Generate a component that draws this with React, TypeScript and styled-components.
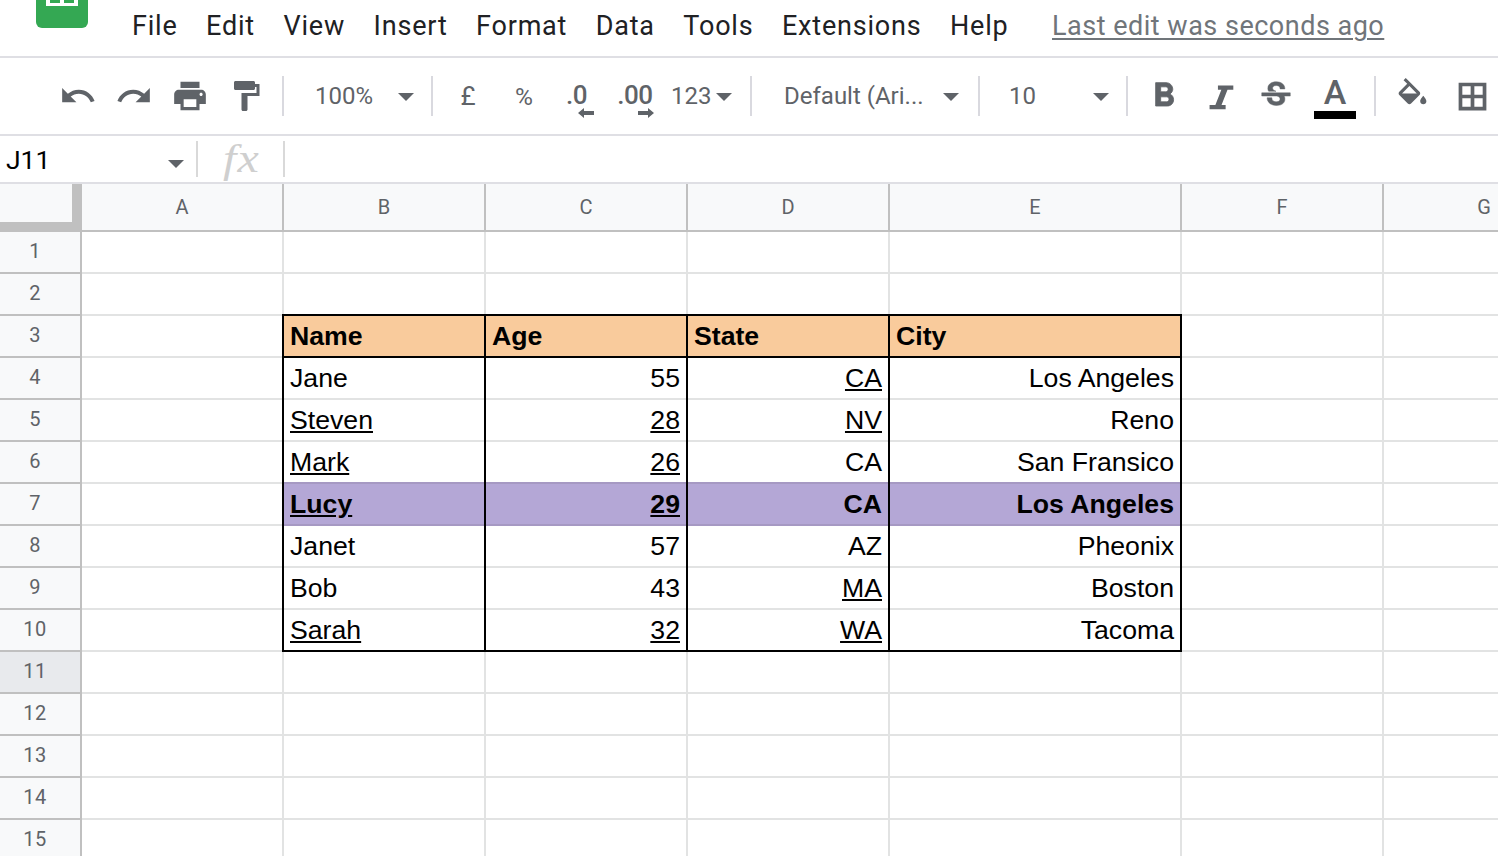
import styled, { createGlobalStyle } from 'styled-components';

const ROBOTO = '"Roboto", "Liberation Sans", sans-serif';
const INK = '#000000';
const ICON = '#5f6368';
const GRID = '#e2e3e3';
const HEADER_LINE = '#c0c0c0';
const BAR_LINE = '#dfdfe4';

const COLUMNS = ['A', 'B', 'C', 'D', 'E', 'F', 'G'];
const MENU = ['File', 'Edit', 'View', 'Insert', 'Format', 'Data', 'Tools', 'Extensions', 'Help'];

type Value = { text: string; link?: boolean };

const t = (text: string): Value => ({ text });
const l = (text: string): Value => ({ text, link: true });

// sheet rows 4-10, row 3 is the header
const PEOPLE: Value[][] = [
  [t('Jane'), t('55'), l('CA'), t('Los Angeles')],
  [l('Steven'), l('28'), l('NV'), t('Reno')],
  [l('Mark'), l('26'), t('CA'), t('San Fransico')],
  [l('Lucy'), l('29'), t('CA'), t('Los Angeles')],
  [t('Janet'), t('57'), t('AZ'), t('Pheonix')],
  [t('Bob'), t('43'), l('MA'), t('Boston')],
  [l('Sarah'), l('32'), l('WA'), t('Tacoma')],
];
const HEADINGS = ['Name', 'Age', 'State', 'City'];

const PATHS = {
  undo: 'M12.5 8c-2.65 0-5.05.99-6.9 2.6L2 7v9h9l-3.62-3.62c1.39-1.16 3.16-1.88 5.12-1.88 3.54 0 6.55 2.31 7.6 5.5l2.37-.78C21.08 11.03 17.15 8 12.5 8z',
  redo: 'M18.4 10.6C16.55 8.99 14.15 8 11.5 8c-4.65 0-8.58 3.03-9.96 7.22L3.9 16c1.05-3.19 4.05-5.5 7.6-5.5 1.95 0 3.73.72 5.12 1.88L13 16h9V7l-3.6 3.6z',
  print: 'M19 8H5c-1.66 0-3 1.34-3 3v6h4v4h12v-4h4v-6c0-1.66-1.34-3-3-3zm-3 11H8v-5h8v5zm3-7c-.55 0-1-.45-1-1s.45-1 1-1 1 .45 1 1-.45 1-1 1zm-1-9H6v4h12V3z',
  paint: 'M18 4V3c0-.55-.45-1-1-1H5c-.55 0-1 .45-1 1v4c0 .55.45 1 1 1h12c.55 0 1-.45 1-1V6h1v4H9v11c0 .55.45 1 1 1h2c.55 0 1-.45 1-1v-9h8V4h-3z',
  bold: 'M15.6 10.79c.97-.67 1.65-1.77 1.65-2.79 0-2.26-1.75-4-4-4H7v14h7.04c2.09 0 3.71-1.7 3.71-3.79 0-1.52-.86-2.82-2.15-3.42zM10 6.5h3c.83 0 1.5.67 1.5 1.5s-.67 1.5-1.5 1.5h-3v-3zm3.5 9H10v-3h3.5c.83 0 1.5.67 1.5 1.5s-.67 1.5-1.5 1.5z',
  italic: 'M10.5 5.5H19.5V8H16.1L12.6 17H15V19.5H5.6V17H9L12.5 8H10.5Z',
  strike: 'M6.85 7.08C6.85 4.37 9.45 3 12.24 3c1.64 0 3 .49 3.9 1.28.77.65 1.46 1.73 1.46 3.24h-3.01c0-.31-.05-.59-.15-.85-.29-.86-1.2-1.28-2.25-1.28-1.86 0-2.34 1.02-2.34 1.7 0 .48.25.88.74 1.21.38.25.77.48 1.41.7H7.39c-.21-.34-.54-.89-.54-1.92zM21 12v-2H3v2h9.62c1.15.45 1.96.75 1.96 1.97 0 1-.81 1.67-2.28 1.67-1.54 0-2.93-.54-2.93-2.51H6.4c0 .55.08 1.13.24 1.58.81 2.29 3.29 3.3 5.67 3.3 2.27 0 5.3-.89 5.3-4.05 0-.3-.01-1.16-.48-1.94H21V12z',
  fill: 'M16.56 8.94L7.62 0 6.21 1.41l2.38 2.38-5.15 5.15c-.59.59-.59 1.54 0 2.12l5.5 5.5c.29.29.68.44 1.06.44s.77-.15 1.06-.44l5.5-5.5c.59-.58.59-1.53 0-2.12zM5.21 10L10 5.21 14.79 10H5.21zM19 11.5s-2 2.17-2 3.5c0 1.1.9 2 2 2s2-.9 2-2c0-1.33-2-3.5-2-3.5z',
  borders: 'M3 3h18v18H3zM5.4 5.4v5.4h5.4V5.4zM13.2 5.4v5.4h5.4V5.4zM5.4 13.2v5.4h5.4v-5.4zM13.2 13.2v5.4h5.4v-5.4z',
  arrowLeft: 'M6 0L0 5l6 5V7h10V3H6z',
  arrowRight: 'M10 0l6 5-6 5V7H0V3h10z',
};

const Icon = ({ d, size = 38, weight = 0 }: { d: string; size?: number; weight?: number }) => (
  <svg width={size} height={size} viewBox="0 0 24 24" fill={ICON} stroke={ICON} strokeWidth={weight} fillRule="evenodd">
    <path d={d} />
  </svg>
);

const Logo = () => (
  <LogoMark width="52" height="28" viewBox="0 0 52 28">
    <path d="M0 0h52v22a6 6 0 0 1-6 6H6a6 6 0 0 1-6-6z" fill="#34a853" />
    <path d="M10 0h32v6H10z" fill="#fff" />
    <path d="M14 0h10v3H14zM28 0h10v3H28z" fill="#34a853" />
  </LogoMark>
);

const App = () => (
  <Page>
    <GlobalStyle />
    <MenuBar>
      <Logo />
      <MenuList>
        {MENU.map(item => (
          <MenuItem key={item}>{item}</MenuItem>
        ))}
        <LastEdit>Last edit was seconds ago</LastEdit>
      </MenuList>
    </MenuBar>

    <Toolbar>
      <ToolButton><Icon d={PATHS.undo} /></ToolButton>
      <ToolButton><Icon d={PATHS.redo} /></ToolButton>
      <ToolButton><Icon d={PATHS.print} /></ToolButton>
      <ToolButton><Icon d={PATHS.paint} size={36} /></ToolButton>
      <Separator />
      <Dropdown $width={147} $left={31} $caret={114}>
        <span>100%</span>
        <Caret />
      </Dropdown>
      <Separator />
      <ToolButton $nudge={-1}><SymbolText>£</SymbolText></ToolButton>
      <ToolButton><PercentText>%</PercentText></ToolButton>
      <ToolButton>
        <DecimalText $shift={-7}>.0</DecimalText>
        <DecimalArrow $right={14} width="16" height="10" viewBox="0 0 16 10"><path d={PATHS.arrowLeft} /></DecimalArrow>
      </ToolButton>
      <ToolButton>
        <DecimalText $shift={-2}>.00</DecimalText>
        <DecimalArrow $right={10} width="16" height="10" viewBox="0 0 16 10"><path d={PATHS.arrowRight} /></DecimalArrow>
      </ToolButton>
      <Dropdown $width={94} $left={15} $caret={60}>
        <span>123</span>
        <Caret />
      </Dropdown>
      <Separator />
      <Dropdown $width={226} $left={32} $caret={191}>
        <span>Default (Ari...</span>
        <Caret />
      </Dropdown>
      <Separator />
      <Dropdown $width={146} $left={29} $caret={113}>
        <span>10</span>
        <Caret />
      </Dropdown>
      <Separator />
      <ToolButton><Icon d={PATHS.bold} size={40} weight={0.5} /></ToolButton>
      <ToolButton><Icon d={PATHS.italic} size={41} /></ToolButton>
      <ToolButton><Icon d={PATHS.strike} size={38} weight={0.3} /></ToolButton>
      <TextColorButton>
        <TextColor>
          <TextColorLetter>A</TextColorLetter>
          <TextColorBar />
        </TextColor>
      </TextColorButton>
      <Separator />
      <ToolButton><Icon d={PATHS.fill} size={37} /></ToolButton>
      <BorderButton><Icon d={PATHS.borders} size={37} /></BorderButton>
    </Toolbar>

    <FormulaBar>
      <NameBox>
        <span>J11</span>
        <Caret />
      </NameBox>
      <FormulaLine />
      <FxMark>fx</FxMark>
      <FormulaLine />
    </FormulaBar>

    <Sheet>
      <Corner />
      {COLUMNS.map(column => (
        <ColumnHeader key={column}>{column}</ColumnHeader>
      ))}
      {Array.from({ length: 15 }, (_, index) => index + 1).flatMap(row => [
        <RowHeader key={`row-${row}`} $active={row === 11}>{row}</RowHeader>,
        ...COLUMNS.map((column, colIndex) => renderCell(row, column, colIndex)),
      ])}
    </Sheet>
  </Page>
);

// column B-E (index 1-4) in rows 3-10 is the table, col A only shares its left edge
const renderCell = (row: number, column: string, colIndex: number) => {
  const inTable = row >= 3 && row <= 10 && colIndex >= 1 && colIndex <= 4;
  const edgeCol = colIndex <= 4;

  let bottom = GRID;
  if ((row === 2 || row === 3 || row === 10) && colIndex >= 1 && colIndex <= 4) bottom = INK;
  if ((row === 6 || row === 7) && colIndex >= 1 && colIndex <= 4) bottom = '#a699c3';

  const right = row >= 3 && row <= 10 && edgeCol ? INK : GRID;
  const corner = row >= 2 && row <= 10 && edgeCol ? INK : 'transparent';

  let background = '#ffffff';
  if (inTable && row === 3) background = '#f9cb9c';
  if (inTable && row === 7) background = '#b4a7d6';

  let value: Value | null = null;
  if (inTable && row === 3) value = t(HEADINGS[colIndex - 1]);
  if (inTable && row > 3) value = PEOPLE[row - 4][colIndex - 1];

  const alignRight = inTable && row > 3 && colIndex > 1;

  return (
    <Cell
      key={`${column}${row}`}
      $right={right}
      $bottom={bottom}
      $corner={corner}
      $background={background}
      $alignRight={alignRight}
      $bold={row === 3 || row === 7}
    >
      {value && (value.link ? <CellLink>{value.text}</CellLink> : value.text)}
    </Cell>
  );
};

const GlobalStyle = createGlobalStyle`
  html, body {
    margin: 0;
    padding: 0;
    background: #ffffff;
  }
`;

const Page = styled.div`
  width: 1498px;
  height: 856px;
  overflow: hidden;
  font-family: ${ROBOTO};
`;

const MenuBar = styled.div`
  height: 56px;
  display: flex;
  align-items: flex-start;
  padding-left: 36px;
  border-bottom: 2px solid ${BAR_LINE};
`;

const LogoMark = styled.svg`
  display: block;
  flex: none;
`;

const MenuList = styled.div`
  display: flex;
  align-items: center;
  gap: 28.5px;
  height: 52px;
  margin-left: 44px;
  font-size: 27px;
  letter-spacing: 0.8px;
  color: #202124;
`;

const MenuItem = styled.span`
  white-space: nowrap;
`;

const LastEdit = styled.span`
  margin-left: 15px;
  white-space: nowrap;
  letter-spacing: 0.5px;
  color: #70757a;
  text-decoration: underline;
  text-decoration-thickness: 2px;
  text-underline-offset: 3px;
`;

const Toolbar = styled.div`
  height: 76px;
  display: flex;
  align-items: center;
  padding-left: 50px;
  border-bottom: 2px solid ${BAR_LINE};
  color: ${ICON};
`;

const ToolButton = styled.div<{ $nudge?: number }>`
  position: relative;
  flex: none;
  width: 56px;
  height: 76px;
  margin-left: ${props => props.$nudge ?? 0}px;
  display: flex;
  align-items: center;
  justify-content: center;
`;

const BorderButton = styled(ToolButton)`
  margin-left: 4px;
`;

const TextColorButton = styled(ToolButton)`
  margin: 0 3px;
`;

const Separator = styled.div`
  flex: none;
  width: 2px;
  height: 40px;
  margin: 0 8px;
  background: #d9d9df;
`;

const Dropdown = styled.div<{ $width: number; $left: number; $caret: number }>`
  position: relative;
  flex: none;
  width: ${props => props.$width}px;
  margin: 0 -8px;
  height: 76px;
  display: flex;
  align-items: center;
  padding-left: ${props => props.$left}px;
  box-sizing: border-box;
  font-size: 24px;
  white-space: nowrap;

  & > i {
    position: absolute;
    left: ${props => props.$caret}px;
    top: 35px;
  }
`;

const Caret = styled.i`
  display: block;
  width: 0;
  height: 0;
  border-left: 8px solid transparent;
  border-right: 8px solid transparent;
  border-top: 8px solid ${ICON};
`;

const SymbolText = styled.span`
  font-size: 26px;
`;

const PercentText = styled.span`
  font-size: 24.5px;
`;

const DecimalText = styled.span<{ $shift: number }>`
  font-size: 26px;
  font-weight: 500;
  letter-spacing: -0.5px;
  margin-top: -3px;
  margin-left: ${props => props.$shift}px;
`;

const DecimalArrow = styled.svg<{ $right: number }>`
  position: absolute;
  right: ${props => props.$right}px;
  top: 50px;
  fill: ${ICON};
`;

const TextColor = styled.div`
  display: flex;
  flex-direction: column;
  align-items: center;
  width: 42px;
  margin-top: 2px;
`;

const TextColorLetter = styled.span`
  font-size: 34px;
  font-weight: 500;
  line-height: 34px;
  height: 36px;
`;

const TextColorBar = styled.div`
  width: 42px;
  height: 8px;
  background: #000000;
`;

const FormulaBar = styled.div`
  height: 46px;
  display: flex;
  align-items: center;
  border-bottom: 2px solid ${BAR_LINE};
`;

const NameBox = styled.div`
  position: relative;
  width: 196px;
  box-sizing: border-box;
  padding-left: 6px;
  font-size: 26.5px;
  color: #000000;

  & > i {
    position: absolute;
    left: 168px;
    top: 16px;
  }
`;

const FormulaLine = styled.div`
  width: 2px;
  height: 36px;
  background: #d9d9d9;
`;

const FxMark = styled.span`
  width: 85px;
  box-sizing: border-box;
  padding-left: 25px;
  font-family: "Liberation Serif", serif;
  font-style: italic;
  font-size: 40px;
  letter-spacing: 1px;
  color: #cfcfcf;
  line-height: 42px;
  transform: scaleX(1.2);
  transform-origin: 25px 0;
`;

const Sheet = styled.div`
  display: grid;
  grid-template-columns: 82px 202px 202px 202px 202px 292px 202px 202px;
  grid-auto-rows: 42px;
  grid-template-rows: 48px;
  width: 1586px;
`;

const Corner = styled.div`
  box-sizing: border-box;
  background: #f8f9fa;
  border-right: 10px solid ${HEADER_LINE};
  border-bottom: 10px solid ${HEADER_LINE};
`;

const ColumnHeader = styled.div`
  box-sizing: border-box;
  display: flex;
  align-items: center;
  justify-content: center;
  background: #f8f9fa;
  border-right: 2px solid ${HEADER_LINE};
  border-bottom: 2px solid ${HEADER_LINE};
  font-size: 20px;
  color: ${ICON};
`;

const RowHeader = styled.div<{ $active: boolean }>`
  box-sizing: border-box;
  grid-column: 1;
  display: flex;
  align-items: center;
  justify-content: center;
  padding: 0 10px 2px 0;
  background: ${props => (props.$active ? '#e8eaed' : '#f8f9fa')};
  border-right: 2px solid ${HEADER_LINE};
  border-bottom: 2px solid ${HEADER_LINE};
  font-size: 20px;
  letter-spacing: 0.5px;
  color: ${ICON};
`;

const Cell = styled.div<{
  $right: string;
  $bottom: string;
  $corner: string;
  $background: string;
  $alignRight: boolean;
  $bold: boolean;
}>`
  position: relative;
  box-sizing: border-box;
  padding: 0 6px;
  background: ${props => props.$background};
  border-right: 2px solid ${props => props.$right};
  border-bottom: 2px solid ${props => props.$bottom};
  font-family: "Liberation Sans", Arial, sans-serif;
  font-size: 26.67px;
  line-height: 40px;
  color: #000000;
  white-space: nowrap;
  text-align: ${props => (props.$alignRight ? 'right' : 'left')};
  font-weight: ${props => (props.$bold ? 700 : 400)};

  &::after {
    content: '';
    position: absolute;
    left: 100%;
    top: 100%;
    width: 2px;
    height: 2px;
    background: ${props => props.$corner};
  }
`;

const CellLink = styled.span`
  text-decoration: underline;
`;

export default App;
